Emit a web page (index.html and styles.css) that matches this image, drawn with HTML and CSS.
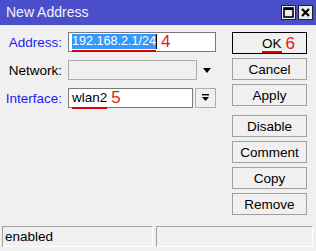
FILE: index.html
```html
<!DOCTYPE html>
<html lang="en">
<head>
	<meta charset="UTF-8">
	<title>New Address</title>
	<link rel="stylesheet" href="styles.css">
</head>
<body>
	<div class="window">
		<header class="titlebar">
			<span class="title">New Address</span>
			<div class="winbtns">
				<span class="winbtn">
					<svg width="11" height="11" viewBox="0 0 11 11"><rect x="1" y="1" width="9" height="9" fill="none" stroke="#000" stroke-width="1.6"/><rect x="1" y="1" width="9" height="2" fill="#000"/></svg>
				</span>
				<span class="winbtn">
					<svg width="11" height="11" viewBox="0 0 11 11"><path d="M2 2 L9 9 M9 2 L2 9" stroke="#000" stroke-width="2.2"/></svg>
				</span>
			</div>
		</header>

		<main class="body">
			<section class="form">
				<div class="row">
					<label class="lbl blue">Address:</label>
					<div class="field">
						<span class="sel ul">192.168.2.1/24</span><span class="caret"></span>
						<span class="mark">4</span>
					</div>
				</div>
				<div class="row">
					<label class="lbl">Network:</label>
					<div class="field disabled"></div>
					<span class="drop"></span>
				</div>
				<div class="row">
					<label class="lbl blue">Interface:</label>
					<div class="field short">
						<span class="txt ul">wlan2</span>
						<span class="mark">5</span>
					</div>
					<button class="pick">
						<svg width="9" height="8" viewBox="0 0 9 8"><rect x="1" y="0" width="7" height="1.4" fill="#000"/><path d="M1 3 H8 L4.5 7 Z" fill="#000"/></svg>
					</button>
				</div>
			</section>

			<section class="buttons">
				<button class="btn default"><span class="ul">OK</span><span class="mark">6</span></button>
				<button class="btn">Cancel</button>
				<button class="btn">Apply</button>
				<button class="btn sep">Disable</button>
				<button class="btn">Comment</button>
				<button class="btn">Copy</button>
				<button class="btn">Remove</button>
			</section>
		</main>

		<footer class="status">
			<div class="panel left">enabled</div>
			<div class="panel right"></div>
		</footer>
	</div>
</body>
</html>
```

FILE: styles.css
```css
html, body {
	margin: 0;
	padding: 0;
	background: #f0f0f0;
}
.window {
	width: 316px;
	height: 251px;
	background: #f0f0f0;
	font: 13.5px "Liberation Sans", Arial, sans-serif;
	color: #000;
	display: flex;
	flex-direction: column;
}

/* title bar */
.titlebar {
	height: 25px;
	background: #4a4ec8;
	display: flex;
	align-items: center;
	justify-content: space-between;
	padding: 0 3px 0 6px;
	box-sizing: border-box;
}
.title {
	color: #f2f2ff;
	font-size: 14px;
	margin-top: -1px;
}
.winbtns {
	display: flex;
	gap: 2px;
	margin-top: -1px;
}
.winbtn {
	width: 15px;
	height: 15px;
	box-sizing: border-box;
	border: 1px solid #222;
	background: #ebebeb;
	display: flex;
	align-items: center;
	justify-content: center;
}

/* body */
.body {
	flex: 1;
	display: flex;
	justify-content: space-between;
	padding: 7px 9px 0 2px;
}
.form {
	display: flex;
	flex-direction: column;
	gap: 8px;
}
.row {
	display: flex;
	align-items: center;
	height: 20px;
}
.lbl {
	width: 60px;
	text-align: right;
	margin-right: 6px;
	white-space: nowrap;
}
.lbl.blue {
	color: #1c1cf2;
}
.field {
	position: relative;
	width: 148px;
	height: 20px;
	box-sizing: border-box;
	border: 1px solid #7a7a7a;
	background: #fff;
	display: flex;
	align-items: flex-start;
	padding-left: 3px;
	line-height: 16px;
	font-size: 12.6px;
}
.field.disabled {
	width: 129px;
	background: #f0f0f0;
	border-color: #adadad;
}
.field.short {
	width: 125px;
	font-size: 13.5px;
}
.sel {
	background: #3399ff;
	color: #fff;
	line-height: 15px;
	margin-top: 1px;
}
.txt {
	margin-top: 1px;
}
.caret {
	width: 1px;
	height: 15px;
	margin-top: 1px;
	background: #000;
}
.ul {
	position: relative;
}
.ul::after {
	content: "";
	position: absolute;
	left: 0;
	right: 0;
	bottom: -3px;
	height: 2px;
	background: #e00000;
}
.mark {
	color: #e81818;
	font-size: 17px;
	line-height: 16px;
	margin-left: 4px;
	margin-top: 1px;
}
.drop {
	width: 0;
	height: 0;
	border-left: 4px solid transparent;
	border-right: 4px solid transparent;
	border-top: 5px solid #000;
	margin-left: 6px;
}
.pick {
	width: 21px;
	height: 20px;
	margin: 0 0 0 2px;
	padding: 0;
	box-sizing: border-box;
	border: 1px solid #adadad;
	background: #f0f0f0;
	display: flex;
	align-items: center;
	justify-content: center;
}

/* buttons */
.buttons {
	display: flex;
	flex-direction: column;
	gap: 4px;
}
.btn {
	width: 75px;
	height: 22px;
	box-sizing: border-box;
	border: 1px solid #a0a0a0;
	background: #f0f0f0;
	font: 13.5px "Liberation Sans", Arial, sans-serif;
	color: #000;
	padding: 0;
	display: flex;
	align-items: center;
	justify-content: center;
}
.btn.default {
	border: 1px solid #000;
	padding-left: 18px;
}
.btn.default .ul::after {
	bottom: -2px;
}
.btn.sep {
	margin-top: 5px;
}

/* status bar */
.status {
	display: flex;
	gap: 3px;
	padding: 0 3px 4px 2px;
	height: 25px;
	box-sizing: content-box;
}
.panel {
	height: 21px;
	box-sizing: border-box;
	border-top: 1px solid #a0a0a0;
	border-left: 1px solid #a0a0a0;
	border-right: 1px solid #fff;
	border-bottom: 1px solid #fff;
	padding-left: 2px;
	line-height: 19px;
	margin-top: 4px;
}
.panel.left {
	width: 151px;
}
.panel.right {
	flex: 1;
}
```
